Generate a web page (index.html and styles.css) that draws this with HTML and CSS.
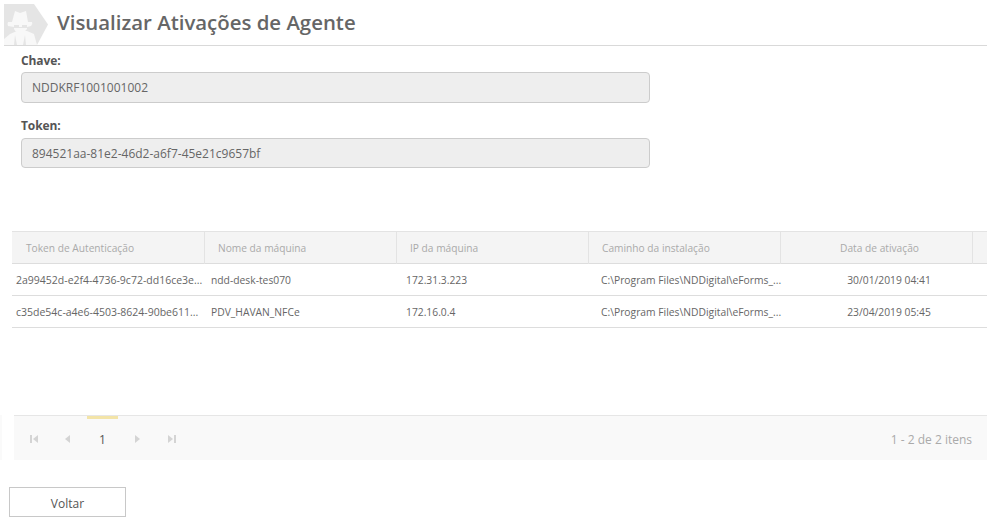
FILE: index.html
```html
<!DOCTYPE html>
<html lang="pt-BR">
<head>
<meta charset="utf-8">
<title>Visualizar Ativações de Agente</title>
<link rel="stylesheet" href="styles.css">
</head>
<body>
<header class="page-header">
  <svg class="logo" width="46" height="41" viewBox="0 0 46 41">
    <path d="M0 0H30L44 20.500L33 41H0Z" fill="#e5e5e5"/>
    <path d="M0 41V35L6 30L13 27H23L30 30L33 41Z" fill="#f8f8f8"/>
    <path d="M4 22Q3 20 4 18H8L11 7L16 9L22 7L24 18H28Q29 20 27 22L23 23V25Q20 29 16 29Q12 29 10 25V23Z" fill="#f8f8f8"/>
    <path d="M10 21H15V23H18V21H23V24H10Z" fill="#e5e5e5"/>
    <path d="M11 31L10 41H13ZM21 31L19 41H22Z" fill="#e5e5e5"/>
  </svg>
  <h1 class="title">Visualizar Ativações de Agente</h1>
</header>
<section class="form">
  <label class="field-label">Chave:</label>
  <div class="field-box">NDDKRF1001001002</div>
  <label class="field-label field-label-second">Token:</label>
  <div class="field-box field-box-token">894521aa-81e2-46d2-a6f7-45e21c9657bf</div>
</section>
<section class="grid">
  <div class="row head">
    <div class="cell">Token de Autenticação</div>
    <div class="cell">Nome da máquina</div>
    <div class="cell">IP da máquina</div>
    <div class="cell">Caminho da instalação</div>
    <div class="cell center">Data de ativação</div>
    <div class="cell"></div>
  </div>
  <div class="row body-row">
    <div class="cell first">2a99452d-e2f4-4736-9c72-dd16ce3e...</div>
    <div class="cell">ndd-desk-tes070</div>
    <div class="cell">172.31.3.223</div>
    <div class="cell">C:\Program Files\NDDigital\eForms_...</div>
    <div class="cell center">30/01/2019 04:41</div>
    <div class="cell"></div>
  </div>
  <div class="row body-row">
    <div class="cell first">c35de54c-a4e6-4503-8624-90be611...</div>
    <div class="cell">PDV_HAVAN_NFCe</div>
    <div class="cell">172.16.0.4</div>
    <div class="cell">C:\Program Files\NDDigital\eForms_...</div>
    <div class="cell center">23/04/2019 05:45</div>
    <div class="cell"></div>
  </div>
</section>
<div class="pager-wrap">
  <div class="pager-strip"></div>
  <nav class="pager">
    <div class="pager-nav">
      <svg class="pg-icon pg-first" width="10" height="10" viewBox="0 0 10 10"><path d="M1 1H3V9H1ZM9 1V9L4 5Z"/></svg>
      <svg class="pg-icon pg-prev" width="10" height="10" viewBox="0 0 10 10"><path d="M7 1V9L2 5Z"/></svg>
      <span class="pg-current">1</span>
      <svg class="pg-icon" width="10" height="10" viewBox="0 0 10 10"><path d="M3 1V9L8 5Z"/></svg>
      <svg class="pg-icon pg-last" width="10" height="10" viewBox="0 0 10 10"><path d="M1 1V9L6 5ZM7 1H9V9H7Z"/></svg>
    </div>
    <span class="pg-info">1 - 2 de 2 itens</span>
  </nav>
</div>
<button class="back" type="button">Voltar</button>
</body>
</html>
```
FILE: styles.css
```css
* { box-sizing: border-box; }
html, body { margin: 0; padding: 0; }
body {
  width: 987px;
  height: 524px;
  overflow: hidden;
  background: #fff;
  font-family: "Open Sans", sans-serif;
  color: #666;
}
.page-header {
  height: 46px;
  margin-left: 4px;
  padding-top: 4px;
  display: flex;
  align-items: flex-start;
  border-bottom: 1px solid #d9d9d9;
}
.logo { flex: none; display: block; }
.title {
  margin: 3px 0 0 7px;
  font-size: 20.400px;
  line-height: 30px;
  font-weight: 600;
  color: #666;
}
.form {
  width: 650px;
  padding-left: 21px;
  height: 179px;
}
.field-label {
  display: block;
  margin-top: 6px;
  font-size: 12px;
  line-height: 18px;
  font-weight: 700;
  color: #555;
  letter-spacing: -0.1px;
}
.field-label-second { margin-top: 14px; }
.field-box {
  height: 31px;
  margin-top: 2px;
  padding: 0 10px;
  background: #eee;
  border: 1px solid #ccc;
  border-radius: 4px;
  font-size: 12px;
  line-height: 29px;
  color: #666;
}
.field-box-token { height: 30px; margin-top: 3px; }
.grid { margin-left: 12px; }
.row {
  display: grid;
  grid-template-columns: 193px repeat(4, 192px) 14px;
  height: 32px;
  font-size: 10.300px;
  border-bottom: 1px solid #ddd;
}
.row.head {
  height: 33px;
  background: #f4f4f4;
  border-top: 1px solid #e3e3e3;
  color: #aaa;
  font-size: 10.200px;
  line-height: 32px;
}
.head .cell {
  padding-left: 13px;
  border-right: 1px solid #e3e3e3;
}
.head .cell:first-child { padding-left: 14px; }
.head .cell:last-child { border-right: 0; }
.body-row { line-height: 33px; color: #666; }
.body-row .cell { padding-left: 6px; white-space: nowrap; }
.body-row .cell.first { padding-left: 4px; font-size: 10.500px; }
.body-row .cell:nth-child(3) { padding-left: 9px; }
.body-row .cell:nth-child(4) { padding-left: 12px; }
.cell.center { text-align: center; padding-left: 0; }
.head .cell.center { padding-left: 6px; }
.body-row .cell.center { padding-left: 24px; }
.pager-wrap {
  display: flex;
  justify-content: space-between;
  margin-top: 87px;
}
.pager-strip { width: 2px; height: 45px; background: #fafafa; }
.pager {
  width: 973px;
  height: 45px;
  display: flex;
  justify-content: space-between;
  align-items: center;
  padding-right: 15px;
  background: #f9f9f9;
  border-top: 1px solid #e6e6e6;
}
.pager-nav { display: flex; align-items: center; height: 44px; }
.pg-icon { fill: #d4d4d4; flex: none; margin-top: 2px; }
.pg-first { margin-left: 15px; }
.pg-prev { margin-left: 24px; }
.pg-last { margin-left: 25px; }
.pg-current {
  width: 31px;
  height: 44px;
  margin: -1px 14px 0 14px;
  border-top: 3px solid #f3e4a8;
  text-align: center;
  font-size: 12px;
  line-height: 42px;
  color: #555;
}
.pg-info { font-size: 12px; color: #aaa; margin-top: 2px; }
.back {
  display: block;
  width: 117px;
  height: 30px;
  margin: 27px 0 0 9px;
  padding: 2px 0 0;
  background: #fff;
  border: 1px solid #c8c8c8;
  font-family: "Open Sans", sans-serif;
  font-size: 12px;
  color: #555;
}
```
